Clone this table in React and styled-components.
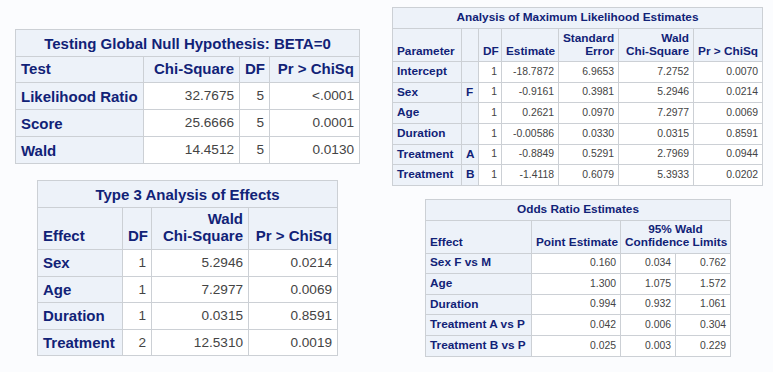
import React from 'react';
import styled, { createGlobalStyle } from 'styled-components';

const GlobalStyle = createGlobalStyle`
  html, body {
    margin: 0;
    padding: 0;
    background: #fbfcfe;
  }
  body {
    font-family: "Liberation Sans", Arial, sans-serif;
  }
`;

const SIZES = {
  lg: { head: 15, body: 13.6, pad: 5, title: 27 },
  sm: { head: 11.8, body: 10.4, pad: 4, title: 21 },
};

const global = {
  title: 'Testing Global Null Hypothesis: BETA=0',
  cols: [128, 96, 30, 90],
  rows: [
    ['Likelihood Ratio', '32.7675', '5', '<.0001'],
    ['Score', '25.6666', '5', '0.0001'],
    ['Wald', '14.4512', '5', '0.0130'],
  ],
};

const type3 = {
  title: 'Type 3 Analysis of Effects',
  cols: [85, 29, 97, 89],
  rows: [
    ['Sex', '1', '5.2946', '0.0214'],
    ['Age', '1', '7.2977', '0.0069'],
    ['Duration', '1', '0.0315', '0.8591'],
    ['Treatment', '2', '12.5310', '0.0019'],
  ],
};

const mle = {
  title: 'Analysis of Maximum Likelihood Estimates',
  cols: [69, 17, 23, 57, 60, 75, 69],
  rows: [
    ['Intercept', '', '1', '-18.7872', '6.9653', '7.2752', '0.0070'],
    ['Sex', 'F', '1', '-0.9161', '0.3981', '5.2946', '0.0214'],
    ['Age', '', '1', '0.2621', '0.0970', '7.2977', '0.0069'],
    ['Duration', '', '1', '-0.00586', '0.0330', '0.0315', '0.8591'],
    ['Treatment', 'A', '1', '-0.8849', '0.5291', '2.7969', '0.0944'],
    ['Treatment', 'B', '1', '-1.4118', '0.6079', '5.3933', '0.0202'],
  ],
};

const odds = {
  title: 'Odds Ratio Estimates',
  cols: [106, 89, 55, 55],
  rows: [
    ['Sex F vs M', '0.160', '0.034', '0.762'],
    ['Age', '1.300', '1.075', '1.572'],
    ['Duration', '0.994', '0.932', '1.061'],
    ['Treatment A vs P', '0.042', '0.006', '0.304'],
    ['Treatment B vs P', '0.025', '0.003', '0.229'],
  ],
};

const Cols = ({ widths }) => (
  <colgroup>
    {widths.map((w, i) => (
      <col key={i} style={{ width: w }} />
    ))}
  </colgroup>
);

const Title = ({ span, children }) => (
  <tr>
    <TitleCell colSpan={span}>{children}</TitleCell>
  </tr>
);

export default function App() {
  return (
    <Page>
      <GlobalStyle />
      <LeftColumn>
        <Table $size="lg" $w={344}>
          <Cols widths={global.cols} />
          <tbody>
            <Title span={4}>{global.title}</Title>
            <Row $h={26}>
              <HeadCell>Test</HeadCell>
              <HeadCell $align="right">Chi-Square</HeadCell>
              <HeadCell $align="right">DF</HeadCell>
              <HeadCell $align="right">Pr &gt; ChiSq</HeadCell>
            </Row>
            {global.rows.map((r) => (
              <Row key={r[0]} $h={27}>
                <RowHead>{r[0]}</RowHead>
                {r.slice(1).map((v, i) => (
                  <Cell key={i}>{v}</Cell>
                ))}
              </Row>
            ))}
          </tbody>
        </Table>

        <Shifted $left={22} $top={16}>
          <Table $size="lg" $w={300}>
            <Cols widths={type3.cols} />
            <tbody>
              <Title span={4}>{type3.title}</Title>
              <Row $h={42}>
                <HeadCell>Effect</HeadCell>
                <HeadCell $align="right">DF</HeadCell>
                <HeadCell $align="right">
                  Wald
                  <br />
                  Chi-Square
                </HeadCell>
                <HeadCell $align="right">Pr &gt; ChiSq</HeadCell>
              </Row>
              {type3.rows.map((r) => (
                <Row key={r[0]} $h={26.6}>
                  <RowHead>{r[0]}</RowHead>
                  {r.slice(1).map((v, i) => (
                    <Cell key={i}>{v}</Cell>
                  ))}
                </Row>
              ))}
            </tbody>
          </Table>
        </Shifted>
      </LeftColumn>

      <RightColumn>
        <Table $size="sm" $w={370}>
          <Cols widths={mle.cols} />
          <tbody>
            <Title span={7}>{mle.title}</Title>
            <Row $h={33}>
              <HeadCell>Parameter</HeadCell>
              <HeadCell />
              <HeadCell $align="right">DF</HeadCell>
              <HeadCell $align="right">Estimate</HeadCell>
              <HeadCell $align="right">
                Standard
                <br />
                Error
              </HeadCell>
              <HeadCell $align="right">
                Wald
                <br />
                Chi-Square
              </HeadCell>
              <HeadCell $align="right">Pr &gt; ChiSq</HeadCell>
            </Row>
            {mle.rows.map((r, n) => (
              <Row key={n} $h={20.7}>
                <RowHead>{r[0]}</RowHead>
                <RowHead>{r[1]}</RowHead>
                {r.slice(2).map((v, i) => (
                  <Cell key={i}>{v}</Cell>
                ))}
              </Row>
            ))}
          </tbody>
        </Table>

        <Shifted $left={33} $top={13}>
          <Table $size="sm" $w={305}>
            <Cols widths={odds.cols} />
            <tbody>
              <Title span={4}>{odds.title}</Title>
              <Row $h={32}>
                <HeadCell>Effect</HeadCell>
                <HeadCell $align="right">Point Estimate</HeadCell>
                <HeadCell colSpan={2} $align="center">
                  95% Wald
                  <br />
                  Confidence Limits
                </HeadCell>
              </Row>
              {odds.rows.map((r) => (
                <Row key={r[0]} $h={20.6}>
                  <RowHead>{r[0]}</RowHead>
                  {r.slice(1).map((v, i) => (
                    <Cell key={i}>{v}</Cell>
                  ))}
                </Row>
              ))}
            </tbody>
          </Table>
        </Shifted>
      </RightColumn>
    </Page>
  );
}

const Page = styled.div`
  display: flex;
  align-items: flex-start;
  width: 773px;
  height: 372px;
  overflow: hidden;
`;

const LeftColumn = styled.div`
  display: flex;
  flex-direction: column;
  align-items: flex-start;
  width: 377px;
  padding: 29px 0 0 15px;
`;

const RightColumn = styled.div`
  display: flex;
  flex-direction: column;
  align-items: flex-start;
  padding-top: 7px;
`;

const Shifted = styled.div`
  margin-left: ${({ $left }) => $left}px;
  margin-top: ${({ $top }) => $top}px;
`;

const Table = styled.table`
  --head-size: ${({ $size }) => SIZES[$size].head}px;
  --body-size: ${({ $size }) => SIZES[$size].body}px;
  --pad: ${({ $size }) => SIZES[$size].pad}px;
  --title-h: ${({ $size }) => SIZES[$size].title}px;
  width: ${({ $w }) => $w}px;
  table-layout: fixed;
  border-collapse: collapse;
  border: 1px solid #ccd0d5;
  background: #ffffff;
`;

const Row = styled.tr`
  height: ${({ $h }) => $h}px;
`;

const TitleCell = styled.td`
  height: var(--title-h);
  box-sizing: border-box;
  background: #edf2f9;
  color: #112277;
  font-weight: bold;
  font-size: var(--head-size);
  line-height: 1;
  text-align: center;
  padding: 0 var(--pad);
  border: 1px solid #ccd0d5;
  white-space: nowrap;
`;

const HeadCell = styled.th`
  background: #edf2f9;
  color: #112277;
  font-weight: bold;
  font-size: var(--head-size);
  line-height: 1.12;
  text-align: ${({ $align }) => $align || 'left'};
  vertical-align: bottom;
  padding: 2px var(--pad) calc(var(--pad) - 1px);
  border: 1px solid #ccd0d5;
  white-space: nowrap;
`;

const RowHead = styled.th`
  background: #edf2f9;
  color: #112277;
  font-weight: bold;
  font-size: var(--head-size);
  line-height: 1;
  text-align: left;
  padding: 0 var(--pad);
  border: 1px solid #ccd0d5;
  white-space: nowrap;
`;

const Cell = styled.td`
  color: #444444;
  font-size: var(--body-size);
  line-height: 1;
  text-align: right;
  padding: 0 var(--pad);
  border: 1px solid #ccd0d5;
  white-space: nowrap;
`;
